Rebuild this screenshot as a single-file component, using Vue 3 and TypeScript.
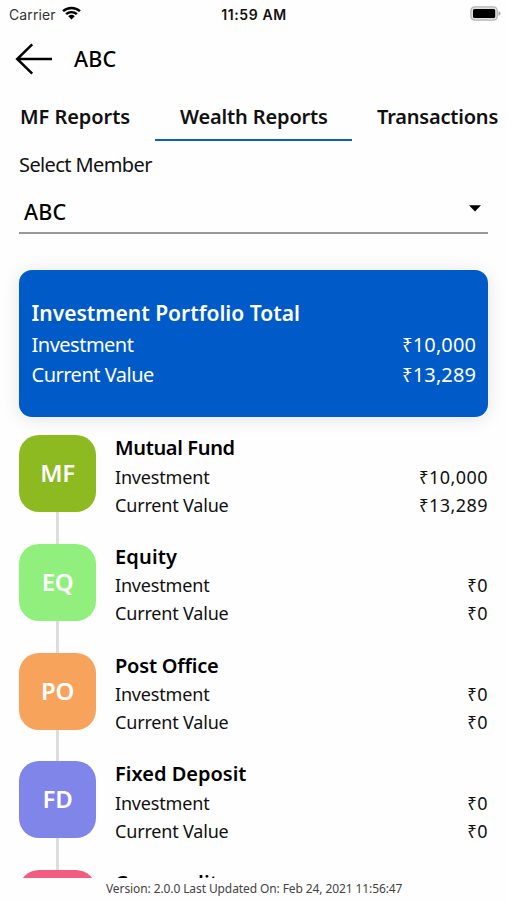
<script setup lang="ts">
interface Holding {
  code?: string
  name: string
  invested?: string
  current?: string
  kind: string
}

const tabs: { label: string; key: string; active: boolean }[] = [
  { label: 'MF Reports', key: 'mf', active: false },
  { label: 'Wealth Reports', key: 'wealth', active: true },
  { label: 'Transactions', key: 'tx', active: false },
]

const holdings: Holding[] = [
  { code: 'MF', name: 'Mutual Fund', invested: '10,000', current: '13,289', kind: 'mutual' },
  { code: 'EQ', name: 'Equity', invested: '0', current: '0', kind: 'equity' },
  { code: 'PO', name: 'Post Office', invested: '0', current: '0', kind: 'post' },
  { code: 'FD', name: 'Fixed Deposit', invested: '0', current: '0', kind: 'deposit' },
  { name: 'Commodity', kind: 'commodity' },
]
</script>

<template>
  <div class="screen">
    <div class="status">
      <div class="carrier">
        <span>Carrier</span>
        <svg class="wifi" width="19" height="14" viewBox="0 0 18 14" preserveAspectRatio="none">
          <g fill="none" stroke="#000" stroke-width="2.4">
            <path d="M1 5.2A11.6 11.6 0 0 1 17 5.2" />
            <path d="M3.9 8.2A7.4 7.4 0 0 1 14.1 8.2" />
          </g>
          <path d="M5.9 10.2A4.5 4.5 0 0 1 12.1 10.2L9 13.4Z" />
        </svg>
      </div>
      <span class="clock">11:59 AM</span>
      <svg class="battery" width="31" height="15" viewBox="0 0 31 15">
        <rect x="0.9" y="0.9" width="26.4" height="13.2" rx="3.8" fill="#e0e0e0" stroke="#b4b4b4" stroke-width="1.2" />
        <rect x="3" y="3" width="22.2" height="9" rx="1.6" />
        <path d="M28.5 5.2Q30.5 5.8 30.5 7.5T28.5 9.8Z" fill="#aaa" />
      </svg>
    </div>

    <header class="header">
      <svg class="back" width="38" height="32" viewBox="0 0 38 32" fill="none" stroke="#000" stroke-width="2.5">
        <path d="M17.2 1.4L2.2 16L17.2 30.6M2.2 16H37" />
      </svg>
      <h1 class="heading">ABC</h1>
    </header>

    <nav class="tabs">
      <div v-for="tab in tabs" :key="tab.key" class="tab" :class="[tab.key, { active: tab.active }]">
        <span>{{ tab.label }}</span>
      </div>
    </nav>

    <section class="member">
      <div class="member-label">Select Member</div>
      <div class="select">
        <span>ABC</span>
        <svg class="caret" width="12" height="7" viewBox="0 0 12 7"><path d="M0 .2H12L6 6.6Z" /></svg>
      </div>
    </section>

    <section class="total">
      <h2 class="total-title">Investment Portfolio Total</h2>
      <div class="row"><span>Investment</span><span class="amount"><span class="rupee">₹</span>10,000</span></div>
      <div class="row"><span>Current Value</span><span class="amount"><span class="rupee">₹</span>13,289</span></div>
    </section>

    <main class="list">
      <article v-for="h in holdings" :key="h.kind" class="item">
        <div class="rail">
          <div class="tile" :class="h.kind">{{ h.code }}</div>
          <div class="line"></div>
        </div>
        <div class="details">
          <h3 class="name" :class="`name-${h.kind}`">{{ h.name }}</h3>
          <div v-if="h.invested" class="row">
            <span>Investment</span><span class="amount"><span class="rupee">₹</span>{{ h.invested }}</span>
          </div>
          <div v-if="h.current" class="row">
            <span>Current Value</span><span class="amount"><span class="rupee">₹</span>{{ h.current }}</span>
          </div>
        </div>
      </article>
    </main>

    <footer class="footer">Version: 2.0.0 Last Updated On: Feb 24, 2021 11:56:47</footer>
  </div>
</template>

<style>
body {
  margin: 0;
  background: #fff;
}
</style>

<style scoped>
.screen {
  display: flex;
  flex-direction: column;
  box-sizing: border-box;
  width: 507px;
  height: 900px;
  overflow: hidden;
  background: #fefefe;
  color: #111;
  font-family: 'Noto Sans', sans-serif;
  white-space: nowrap;
}
h1, h2, h3 {
  margin: 0;
}
.status {
  display: grid;
  grid-template-columns: 1fr auto 1fr;
  align-items: center;
  height: 28px;
  padding: 0 6px 0 9px;
  font-family: Inter, sans-serif;
  font-size: 14px;
  flex: none;
}
.carrier {
  display: flex;
  align-items: center;
  gap: 6px;
  color: #333;
  letter-spacing: 0.1px;
}
.wifi {
  margin-top: -2px;
}
.clock {
  font-weight: 600;
  letter-spacing: 0.6px;
  margin-right: 2px;
}
.battery {
  justify-self: end;
  margin-top: -1px;
}
.header {
  display: flex;
  align-items: center;
  gap: 21px;
  height: 62px;
  padding-left: 15px;
  flex: none;
}
.heading {
  margin-top: -2px;
  font-size: 21.5px;
  font-weight: 500;
  letter-spacing: 0.2px;
  color: #000;
}
.tabs {
  display: flex;
  height: 51px;
  flex: none;
}
.tab {
  display: flex;
  align-items: center;
  box-sizing: border-box;
  height: 51px;
  padding-top: 4px;
  font-size: 20px;
  font-weight: 600;
  letter-spacing: -0.15px;
  border-bottom: 2px solid transparent;
}
.tab.mf {
  width: 155px;
  padding-left: 20px;
  letter-spacing: -0.05px;
}
.tab.wealth {
  width: 197px;
  padding-left: 25px;
}
.tab.tx {
  padding-left: 25px;
  letter-spacing: -0.2px;
}
.tab.active {
  border-bottom-color: #0c5fbf;
}
.member {
  height: 93px;
  padding: 0 19px;
  flex: none;
}
.member-label {
  height: 48px;
  line-height: 48px;
  font-size: 20px;
  letter-spacing: -0.6px;
}
.select {
  display: flex;
  align-items: center;
  justify-content: space-between;
  box-sizing: border-box;
  height: 45px;
  padding: 2px 7px 0 5px;
  border-bottom: 2px solid #999;
  font-size: 21.5px;
  font-weight: 500;
  letter-spacing: 0.2px;
  color: #000;
}
.caret {
  margin-top: -7px;
}
.total {
  box-sizing: border-box;
  width: 469px;
  height: 147px;
  margin: 36px 0 0 19px;
  padding: 28px 12px 0 12.5px;
  border-radius: 13px;
  background: #005bc8;
  box-shadow: 0 2px 18px rgba(0, 0, 0, 0.11);
  color: #fff;
  flex: none;
}
.total-title {
  height: 32px;
  line-height: 31px;
  font-size: 21px;
  font-weight: 600;
}
.row {
  display: flex;
  justify-content: space-between;
}
.total .row {
  height: 30px;
  line-height: 30px;
  font-size: 20px;
  letter-spacing: -0.5px;
}
.total .amount {
  letter-spacing: 0.1px;
}
.rupee {
  font-size: 0.93em;
}
.list {
  height: 461px;
  padding: 18px 19px 0;
  box-sizing: border-box;
  overflow: hidden;
  flex: none;
}
.item {
  display: flex;
  gap: 19px;
  height: 108.75px;
}
.rail {
  display: flex;
  flex-direction: column;
  align-items: center;
  width: 77px;
}
.tile {
  display: flex;
  align-items: center;
  justify-content: center;
  box-sizing: border-box;
  width: 77px;
  height: 77px;
  padding-bottom: 2px;
  border-radius: 20px;
  color: #fff;
  font-size: 24px;
  font-weight: 600;
  letter-spacing: -0.3px;
  flex: none;
}
.mutual {
  background: #8cba20;
}
.equity {
  background: #91ef7e;
}
.post {
  background: #f7a35c;
}
.deposit {
  background: #8085e9;
}
.commodity {
  background: #f15c80;
}
.line {
  width: 3px;
  flex: 1;
  background: #ddd;
}
.details {
  flex: 1;
}
.name {
  height: 27.7px;
  line-height: 26px;
  font-size: 20px;
  font-weight: 600;
  color: #000;
}
.name-mutual {
  letter-spacing: -0.35px;
}
.name-equity {
  letter-spacing: 0.15px;
}
.name-post {
  letter-spacing: -0.2px;
}
.name-commodity {
  letter-spacing: 0.1px;
}
.details .row {
  height: 28px;
  line-height: 28px;
  font-size: 18px;
  letter-spacing: -0.18px;
}
.details .amount {
  letter-spacing: 0.45px;
}
.footer {
  height: 22px;
  line-height: 21px;
  padding-left: 106px;
  font-size: 12px;
  letter-spacing: -0.1px;
  color: #444;
  flex: none;
}
</style>
